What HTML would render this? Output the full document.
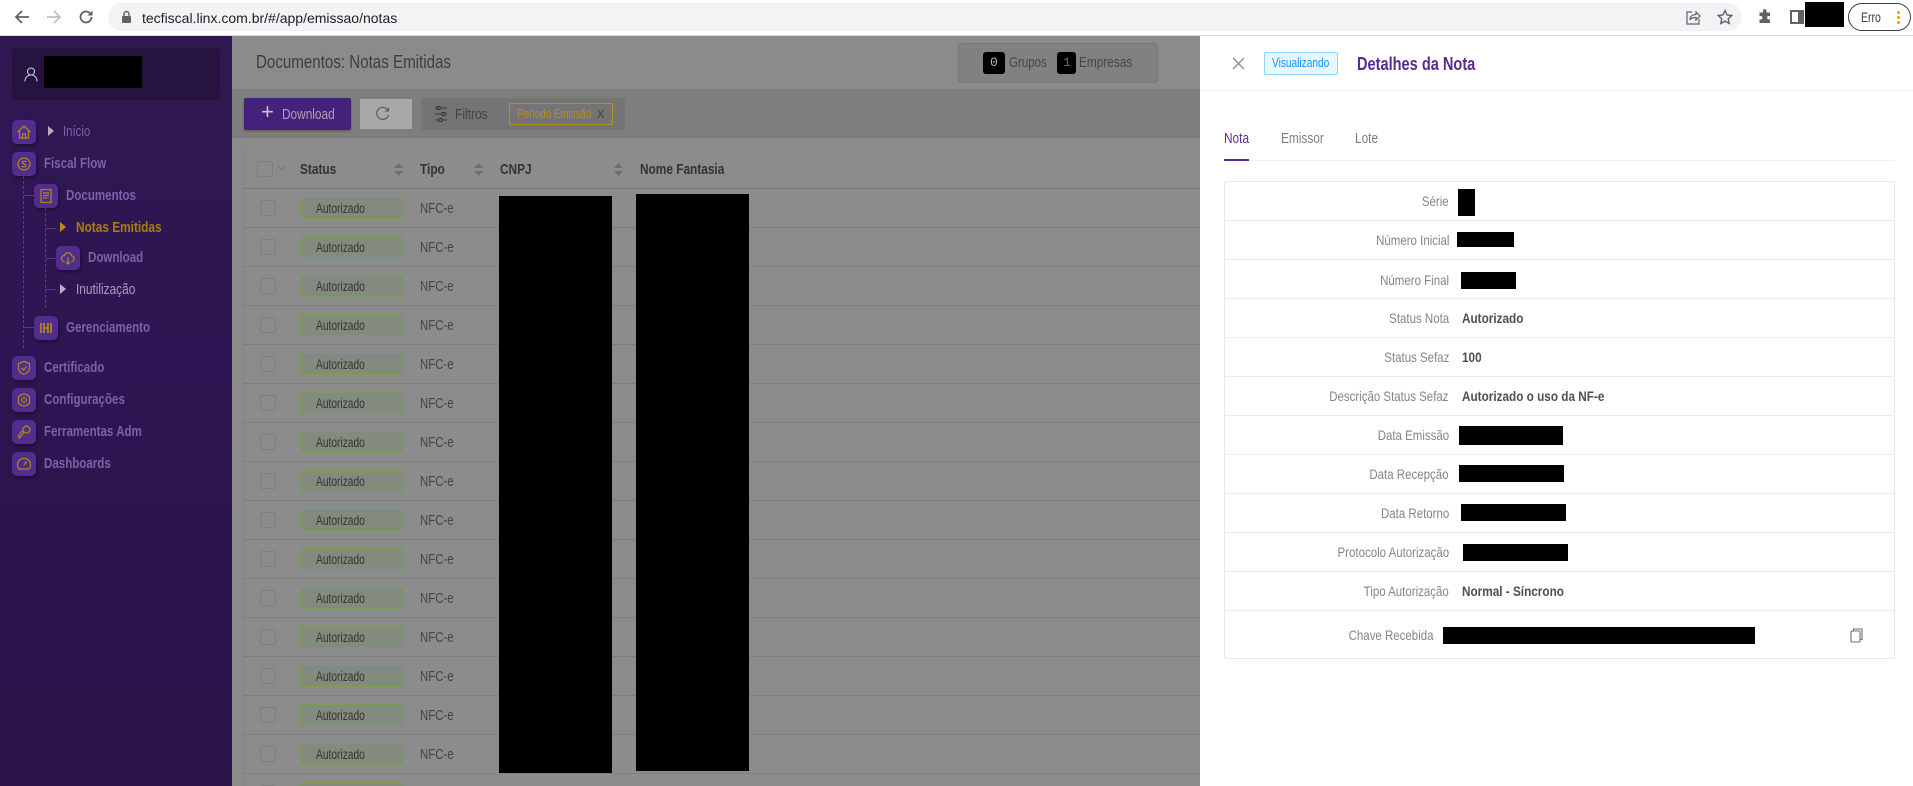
<!DOCTYPE html>
<html lang="pt-BR"><head><meta charset="utf-8"><title>Notas Emitidas</title>
<style>
html,body{margin:0;padding:0;width:1913px;height:786px;overflow:hidden;background:#fff}
body{position:relative;font-family:"Liberation Sans",sans-serif;font-size:14px}
div,span,svg{position:absolute;display:block}
.t{line-height:20px;height:20px;white-space:nowrap;transform:scaleX(.79);transform-origin:0 50%}
.k{background:#000}
.ic{width:24px;height:24px;background:#512e8c;border-radius:5px;box-shadow:1px 2px 3px rgba(0,0,0,.35)}
.ic svg{left:4px;top:4px;width:16px;height:16px;fill:none;stroke:#b08a10;stroke-width:1.2}
.m{color:#7a62a8;font-weight:bold;font-size:15px;transform:scaleX(.77)}
.line{height:1px;left:244px;width:956px;background:#7f7f7f}
.cb{left:260px;width:14px;height:14px;border:1px solid #7f7f7f;border-radius:2px}
.tag{left:300px;width:102px;height:20px;border:1px solid #75a055;background:#828b7d;border-radius:2px}
.tag b{position:absolute;left:15px;top:0;font-weight:normal;font-size:14px;line-height:20px;color:#353535;white-space:nowrap;transform:scaleX(.73);transform-origin:0 50%}
.nf{left:420px;color:#4c414a;font-size:15px;transform:scaleX(.76)}
.th{color:#333;font-weight:bold;font-size:15px}
.rl{height:1px;left:1225px;width:670px;background:#ececec}
.lb{right:464px;color:#84848c;font-size:14px;text-align:right;transform:scaleX(.82);transform-origin:100% 50%}
.vl{left:1462px;color:#4e4e55;font-weight:bold;font-size:14px;transform:scaleX(.84)}
</style></head><body>

<!-- browser bar -->
<div style="left:0;top:0;width:1913px;height:35px;background:#fff"></div>
<div style="left:0;top:35px;width:1913px;height:1px;background:#dadce0"></div>
<div style="left:108px;top:3px;width:1634px;height:28px;background:#f1f3f4;border-radius:14px"></div>
<svg style="left:14px;top:9px" width="16" height="16" viewBox="0 0 16 16" fill="none" stroke="#5f6368" stroke-width="1.8"><path d="M15 8H2M8 2L2 8l6 6"/></svg>
<svg style="left:46px;top:9px" width="16" height="16" viewBox="0 0 16 16" fill="none" stroke="#bdc1c6" stroke-width="1.8"><path d="M1 8h13M8 2l6 6-6 6"/></svg>
<svg style="left:78px;top:9px" width="16" height="16" viewBox="0 0 16 16" fill="none" stroke="#5f6368" stroke-width="1.8"><path d="M13.5 8a5.5 5.5 0 1 1-1.6-3.9L14 6"/><path d="M14.5 1.5V6.5H9.5" fill="#5f6368" stroke="none"/></svg>
<svg style="left:121px;top:10px" width="11" height="14" viewBox="0 0 11 14"><path d="M3 6V4a2.5 2.5 0 0 1 5 0v2" fill="none" stroke="#5f6368" stroke-width="1.4"/><rect x="1" y="6" width="9" height="7" rx="1" fill="#5f6368"/></svg>
<div class="t" style="left:142px;top:8px;font-size:14px;color:#202124;transform:none">tecfiscal.linx.com.br/#/app/emissao/notas</div>
<svg style="left:1686px;top:10px" width="15" height="15" viewBox="0 0 15 15" fill="none" stroke="#5f6368" stroke-width="1.2"><path d="M6 2H1v12h12V9"/><path d="M4 10c0-4 3-5.500 6-5.500V2l4 4-4 4V7.500c-3 0-5 .5-6 2.500z"/></svg>
<svg style="left:1717px;top:9px" width="16" height="16" viewBox="0 0 16 16" fill="none" stroke="#5f6368" stroke-width="1.4"><path d="M8 1.500l2 4.500 4.800.5-3.600 3.200 1 4.800L8 12.100 3.800 14.500l1-4.800L1.200 6.500 6 6z"/></svg>
<svg style="left:1757px;top:9px" width="16" height="16" viewBox="0 0 16 16" fill="#5f6368"><path d="M6 1.500a1.800 1.800 0 0 1 3.500 0V3.500H13V7h-1.500a1.800 1.800 0 0 0 0 3.500H13V14H2.500v-3.500H4a1.800 1.800 0 0 0 0-3.500H2.500V3.500H6z"/></svg>
<svg style="left:1790px;top:10px" width="14" height="14" viewBox="0 0 14 14"><rect x="1" y="1" width="12" height="12" fill="none" stroke="#5f6368" stroke-width="2"/><rect x="8" y="1" width="5" height="12" fill="#5f6368"/></svg>
<div class="k" style="left:1805px;top:2px;width:39px;height:25px"></div>
<div style="left:1848px;top:3px;width:61px;height:26px;border:1px solid #3c4043;border-radius:14px"></div>
<div class="t" style="left:1861px;top:7px;font-size:14px;color:#3c4043;width:24px;transform:scaleX(.75)">Erro</div>
<div style="left:1897px;top:11px;width:3px;height:3px;border-radius:50%;background:#f29900;box-shadow:0 5px 0 #f29900,0 10px 0 #f29900"></div>

<!-- sidebar -->
<div style="left:0;top:36px;width:232px;height:750px;background:linear-gradient(180deg,#2f1852,#2e1553 45%,#2a1448)"></div>
<div style="left:12px;top:48px;width:208px;height:52px;background:#26133f;border-radius:6px"></div>
<svg style="left:24px;top:67px" width="14" height="15" viewBox="0 0 14 15" fill="none" stroke="#c9c5d2" stroke-width="1.1"><circle cx="7" cy="4.500" r="3.500"/><path d="M1 14.500c0-4 2.500-6.500 6-6.500s6 2.500 6 6.500"/></svg>
<div class="k" style="left:44px;top:56px;width:98px;height:32px"></div>

<!-- dashes -->
<div style="left:23px;top:176px;height:172px;border-left:1px dashed #5b3f8e"></div>
<div style="left:45px;top:208px;height:100px;border-left:1px dashed #5b3f8e"></div>
<div style="left:24px;top:195px;width:10px;border-top:1px dashed #5b3f8e"></div>
<div style="left:24px;top:327px;width:10px;border-top:1px dashed #5b3f8e"></div>
<div style="left:46px;top:228px;width:10px;border-top:1px dashed #5b3f8e"></div>
<div style="left:46px;top:258px;width:10px;border-top:1px dashed #5b3f8e"></div>
<div style="left:46px;top:289px;width:10px;border-top:1px dashed #5b3f8e"></div>

<div class="ic" style="left:12px;top:120px"><svg viewBox="0 0 16 16"><path d="M1.500 8L8 2l6.500 6M3.500 7v7h9V7M6.500 14v-4h3v4"/></svg></div>
<div style="left:48px;top:126px;width:0;height:0;border-left:6px solid #b5afbe;border-top:5px solid transparent;border-bottom:5px solid transparent"></div>
<div class="t" style="left:63px;top:122px;color:#7a62a8;font-size:15px;transform:scaleX(.76)">Início</div>

<div class="ic" style="left:12px;top:152px"><svg viewBox="0 0 16 16"><circle cx="8" cy="8" r="6"/><path d="M10 6c-.5-1-3.500-1.200-3.800.3S10 8 10 9.700 6.500 11 6 10"/></svg></div>
<div class="t m" style="left:44px;top:154px">Fiscal Flow</div>

<div class="ic" style="left:34px;top:184px"><svg viewBox="0 0 16 16"><rect x="3" y="1.500" width="10" height="13"/><path d="M5 5h6M5 7.500h6M5 10h4"/></svg></div>
<div class="t m" style="left:66px;top:186px">Documentos</div>

<div style="left:60px;top:222px;width:0;height:0;border-left:6px solid #b8900f;border-top:5px solid transparent;border-bottom:5px solid transparent"></div>
<div class="t" style="left:76px;top:218px;color:#a67f0c;font-weight:bold;font-size:15px">Notas Emitidas</div>

<div class="ic" style="left:56px;top:246px"><svg viewBox="0 0 16 16"><path d="M4.500 11.500a3 3 0 0 1 0-6 3.800 3.800 0 0 1 7.300.3 2.900 2.900 0 0 1-.3 5.700M8 7v7M6 12l2 2 2-2"/></svg></div>
<div class="t m" style="left:88px;top:248px">Download</div>

<div style="left:60px;top:284px;width:0;height:0;border-left:6px solid #b5afbe;border-top:5px solid transparent;border-bottom:5px solid transparent"></div>
<div class="t" style="left:76px;top:280px;color:#a99cc0;font-size:15px">Inutilização</div>

<div class="ic" style="left:34px;top:316px"><svg viewBox="0 0 16 16" style="stroke-width:1.700"><path d="M3 3v10M6 3v10M10 3v10M13 3v10M6 8h4"/></svg></div>
<div class="t m" style="left:66px;top:318px">Gerenciamento</div>

<div class="ic" style="left:12px;top:356px"><svg viewBox="0 0 16 16"><path d="M8 1.500l5.500 2V8c0 3.200-2.500 5.300-5.500 6.500C5 13.300 2.500 11.200 2.500 8V3.500z"/><path d="M5.500 8l2 2 3-3.500"/></svg></div>
<div class="t m" style="left:44px;top:358px">Certificado</div>

<div class="ic" style="left:12px;top:388px"><svg viewBox="0 0 16 16"><path d="M8 1.500l5.500 3v7L8 14.500l-5.500-3v-7z"/><circle cx="8" cy="8" r="2.300"/></svg></div>
<div class="t m" style="left:44px;top:390px">Configurações</div>

<div class="ic" style="left:12px;top:420px"><svg viewBox="0 0 16 16"><circle cx="10.500" cy="5.500" r="3.500"/><path d="M8 8l-4.500 6-1-1 .5-2 3.500-4.500"/></svg></div>
<div class="t m" style="left:44px;top:422px">Ferramentas Adm</div>

<div class="ic" style="left:12px;top:452px"><svg viewBox="0 0 16 16"><path d="M3 13a6.500 6.500 0 1 1 10 0z"/><path d="M8 9l2.500-3.500"/></svg></div>
<div class="t m" style="left:44px;top:454px">Dashboards</div>

<!-- main -->
<div style="left:232px;top:36px;width:968px;height:750px;background:#8b8b8b"></div>
<div class="t" style="left:256px;top:52px;font-size:18px;color:#3a3f45;transform:scaleX(.84)">Documentos: Notas Emitidas</div>
<div style="left:958px;top:43px;width:198px;height:38px;border:1px solid #777;border-radius:4px;background:#818181"></div>
<div class="k" style="left:983px;top:52px;width:22px;height:22px;border-radius:3px"></div>
<div class="t" style="left:990px;top:53px;color:#b8b8b8;font-size:13px;font-family:'Liberation Mono',monospace;transform:none">0</div>
<div class="t" style="left:1009px;top:53px;color:#474747;font-size:15px;transform:scaleX(.77)">Grupos</div>
<div class="k" style="left:1057px;top:52px;width:19px;height:22px;border-radius:3px"></div>
<div class="t" style="left:1063px;top:53px;color:#8a6a10;font-size:13px;font-family:'Liberation Mono',monospace;transform:none">1</div>
<div class="t" style="left:1079px;top:53px;color:#474747;font-size:15px">Empresas</div>

<div style="left:232px;top:89px;width:968px;height:49px;background:#7e7e7e"></div>
<div style="left:244px;top:98px;width:107px;height:32px;background:#45227a;border-radius:2px;box-shadow:0 1px 2px rgba(0,0,0,.3)"></div>
<div class="t" style="left:261px;top:102px;color:#c8c0d8;font-size:22px;transform:none">+</div>
<div class="t" style="left:282px;top:105px;color:#aba2bb;font-size:15px">Download</div>
<div style="left:360px;top:99px;width:52px;height:30px;background:#a9a9a9"></div>
<svg style="left:375px;top:106px" width="15" height="15" viewBox="0 0 15 15" fill="none" stroke="#555" stroke-width="1.1"><path d="M13 4.500A6 6 0 1 0 13.500 9"/><path d="M13.500 1.500v3.500H10"/></svg>
<div style="left:421px;top:98px;width:204px;height:32px;background:#747474;border-radius:2px"></div>
<svg style="left:434px;top:105px" width="14" height="18" viewBox="0 0 14 18" fill="none" stroke="#3a3a3a" stroke-width="1.1"><path d="M1 3h12M1 9h12M1 15h12"/><rect x="3" y="1.500" width="3" height="3" fill="#747474"/><rect x="8" y="7.500" width="3" height="3" fill="#747474"/><rect x="5" y="13.500" width="3" height="3" fill="#747474"/></svg>
<div class="t" style="left:455px;top:105px;color:#444;font-size:15px;transform:scaleX(.8)">Filtros</div>
<div style="left:509px;top:103px;width:102px;height:20px;border:1px solid #b98f1e;border-radius:2px"></div>
<div class="t" style="left:517px;top:104px;color:#bd8a2c;font-size:13px;transform:scaleX(.75)">Período Emissão</div>
<div class="t" style="left:597px;top:104px;color:#4a4a4a;font-size:15px;transform:none">x</div>

<!-- table -->
<div style="left:244px;top:150px;width:956px;height:636px;background:#8c8c8c;border-radius:3px 0 0 0;box-shadow:-1px 0 0 #838383"></div>
<div class="line" style="top:188px;background:#777"></div>
<div class="cb" style="left:257px;top:161px"></div>
<svg style="left:277px;top:165px" width="10" height="7" viewBox="0 0 10 7" fill="none" stroke="#777"><path d="M1 1l4 4 4-4"/></svg>
<div class="t th" style="left:300px;top:160px">Status</div>
<div class="t th" style="left:420px;top:160px">Tipo</div>
<div class="t th" style="left:500px;top:160px">CNPJ</div>
<div class="t th" style="left:640px;top:160px">Nome Fantasia</div>
<svg style="left:394px;top:163px" width="9" height="13" viewBox="0 0 9 13" fill="#6d6d6d"><path d="M4.500 0L9 5H0zM4.500 13L0 8h9z"/></svg>
<svg style="left:474px;top:163px" width="9" height="13" viewBox="0 0 9 13" fill="#6d6d6d"><path d="M4.500 0L9 5H0zM4.500 13L0 8h9z"/></svg>
<svg style="left:614px;top:163px" width="9" height="13" viewBox="0 0 9 13" fill="#6d6d6d"><path d="M4.500 0L9 5H0zM4.500 13L0 8h9z"/></svg>

<div class="line" style="top:227px"></div><div class="line" style="top:266px"></div><div class="line" style="top:305px"></div><div class="line" style="top:344px"></div><div class="line" style="top:383px"></div><div class="line" style="top:422px"></div><div class="line" style="top:461px"></div><div class="line" style="top:500px"></div><div class="line" style="top:539px"></div><div class="line" style="top:578px"></div><div class="line" style="top:617px"></div><div class="line" style="top:656px"></div><div class="line" style="top:695px"></div><div class="line" style="top:734px"></div><div class="line" style="top:773px"></div>

<div class="cb" style="top:200px"></div><div class="tag" style="top:197px"><b>Autorizado</b></div><div class="t nf" style="top:199px">NFC-e</div>
<div class="cb" style="top:239px"></div><div class="tag" style="top:236px"><b>Autorizado</b></div><div class="t nf" style="top:238px">NFC-e</div>
<div class="cb" style="top:278px"></div><div class="tag" style="top:275px"><b>Autorizado</b></div><div class="t nf" style="top:277px">NFC-e</div>
<div class="cb" style="top:317px"></div><div class="tag" style="top:314px"><b>Autorizado</b></div><div class="t nf" style="top:316px">NFC-e</div>
<div class="cb" style="top:356px"></div><div class="tag" style="top:353px"><b>Autorizado</b></div><div class="t nf" style="top:355px">NFC-e</div>
<div class="cb" style="top:395px"></div><div class="tag" style="top:392px"><b>Autorizado</b></div><div class="t nf" style="top:394px">NFC-e</div>
<div class="cb" style="top:434px"></div><div class="tag" style="top:431px"><b>Autorizado</b></div><div class="t nf" style="top:433px">NFC-e</div>
<div class="cb" style="top:473px"></div><div class="tag" style="top:470px"><b>Autorizado</b></div><div class="t nf" style="top:472px">NFC-e</div>
<div class="cb" style="top:512px"></div><div class="tag" style="top:509px"><b>Autorizado</b></div><div class="t nf" style="top:511px">NFC-e</div>
<div class="cb" style="top:551px"></div><div class="tag" style="top:548px"><b>Autorizado</b></div><div class="t nf" style="top:550px">NFC-e</div>
<div class="cb" style="top:590px"></div><div class="tag" style="top:587px"><b>Autorizado</b></div><div class="t nf" style="top:589px">NFC-e</div>
<div class="cb" style="top:629px"></div><div class="tag" style="top:626px"><b>Autorizado</b></div><div class="t nf" style="top:628px">NFC-e</div>
<div class="cb" style="top:668px"></div><div class="tag" style="top:665px"><b>Autorizado</b></div><div class="t nf" style="top:667px">NFC-e</div>
<div class="cb" style="top:707px"></div><div class="tag" style="top:704px"><b>Autorizado</b></div><div class="t nf" style="top:706px">NFC-e</div>
<div class="cb" style="top:746px"></div><div class="tag" style="top:743px"><b>Autorizado</b></div><div class="t nf" style="top:745px">NFC-e</div>
<div class="cb" style="top:785px"></div><div class="tag" style="top:782px"><b>Autorizado</b></div><div class="t nf" style="top:784px">NFC-e</div>

<div class="k" style="left:499px;top:196px;width:113px;height:577px"></div>
<div class="k" style="left:636px;top:194px;width:113px;height:577px"></div>

<!-- panel -->
<div style="left:1200px;top:36px;width:713px;height:750px;background:#fff"></div>
<div style="left:1200px;top:90px;width:713px;height:1px;background:#eeeeee"></div>
<svg style="left:1232px;top:57px" width="13" height="13" viewBox="0 0 13 13" fill="none" stroke="#8c8c8c" stroke-width="1.300"><path d="M1 1l11 11M12 1L1 12"/></svg>
<div style="left:1264px;top:52px;width:72px;height:21px;background:#e6f7ff;border:1px solid #91d5ff;border-radius:2px"></div>
<div class="t" style="left:1272px;top:53px;color:#1890ff;font-size:13px;transform:scaleX(.78)">Visualizando</div>
<div class="t" style="left:1357px;top:54px;color:#5b2a90;font-size:18px;font-weight:bold;transform:scaleX(.81)">Detalhes da Nota</div>

<div style="left:1224px;top:160px;width:671px;height:1px;background:#eeeeee"></div>
<div style="left:1224px;top:159px;width:25px;height:2px;background:#5c2d91"></div>
<div class="t" style="left:1224px;top:129px;color:#5c2d91;font-size:15px">Nota</div>
<div class="t" style="left:1281px;top:129px;color:#7d7d7d;font-size:15px">Emissor</div>
<div class="t" style="left:1355px;top:129px;color:#7d7d7d;font-size:15px">Lote</div>

<div style="left:1224px;top:181px;width:671px;height:478px;border:1px solid #e8e8e8;border-radius:2px;box-sizing:border-box"></div>
<div class="rl" style="top:220px"></div><div class="rl" style="top:259px"></div><div class="rl" style="top:298px"></div><div class="rl" style="top:337px"></div><div class="rl" style="top:376px"></div><div class="rl" style="top:415px"></div><div class="rl" style="top:454px"></div><div class="rl" style="top:493px"></div><div class="rl" style="top:532px"></div><div class="rl" style="top:571px"></div><div class="rl" style="top:610px"></div>

<div class="t lb" style="top:191px">Série</div>
<div class="t lb" style="top:230px">Número Inicial</div>
<div class="t lb" style="top:270px">Número Final</div>
<div class="t lb" style="top:308px">Status Nota</div>
<div class="t lb" style="top:347px">Status Sefaz</div>
<div class="t lb" style="top:386px">Descrição Status Sefaz</div>
<div class="t lb" style="top:425px">Data Emissão</div>
<div class="t lb" style="top:464px">Data Recepção</div>
<div class="t lb" style="top:503px">Data Retorno</div>
<div class="t lb" style="top:542px">Protocolo Autorização</div>
<div class="t lb" style="top:581px">Tipo Autorização</div>
<div class="t lb" style="top:625px;right:479px">Chave Recebida</div>

<div class="t vl" style="top:308px">Autorizado</div>
<div class="t vl" style="top:347px">100</div>
<div class="t vl" style="top:386px">Autorizado o uso da NF-e</div>
<div class="t vl" style="top:581px">Normal - Síncrono</div>

<div class="k" style="left:1458px;top:189px;width:17px;height:27px"></div>
<div class="k" style="left:1457px;top:232px;width:57px;height:15px"></div>
<div class="k" style="left:1461px;top:272px;width:55px;height:17px"></div>
<div class="k" style="left:1459px;top:426px;width:104px;height:19px"></div>
<div class="k" style="left:1459px;top:465px;width:105px;height:17px"></div>
<div class="k" style="left:1461px;top:504px;width:105px;height:17px"></div>
<div class="k" style="left:1463px;top:544px;width:105px;height:17px"></div>
<div class="k" style="left:1443px;top:627px;width:312px;height:17px"></div>
<svg style="left:1850px;top:628px" width="13" height="15" viewBox="0 0 13 15" fill="none" stroke="#6e6e6e" stroke-width="1.100"><path d="M3.500 3V1h8.500v10.500h-2"/><rect x="1" y="3" width="9" height="11" rx="1"/></svg>
</body></html>
